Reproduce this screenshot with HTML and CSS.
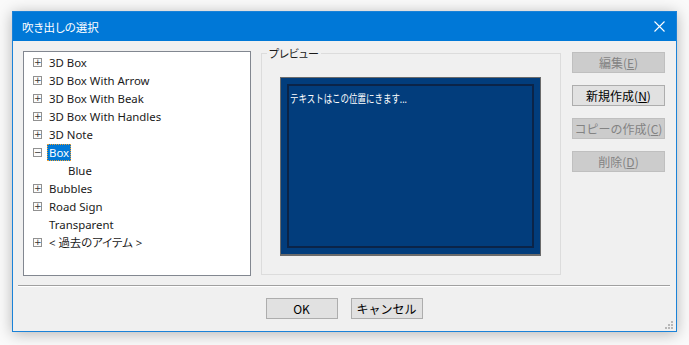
FILE: index.html
```html
<!DOCTYPE html>
<html lang="ja">
<head>
<meta charset="utf-8">
<link rel="stylesheet" href="styles.css">
</head>
<body>
<div class="window">
  <div class="titlebar">
    <span class="title">吹き出しの選択</span>
    <svg class="close" width="11" height="11" viewBox="0 0 11 11"><path d="M0.5 0.5 L10.5 10.5 M10.5 0.5 L0.5 10.5" stroke="#fff" stroke-width="1.1" fill="none"/></svg>
  </div>
  <div class="client">
    <div class="main">
      <div class="tree">
        <div class="row"><span class="exp">+</span><span class="label">3D Box</span></div>
        <div class="row"><span class="exp">+</span><span class="label">3D Box With Arrow</span></div>
        <div class="row"><span class="exp">+</span><span class="label">3D Box With Beak</span></div>
        <div class="row"><span class="exp">+</span><span class="label">3D Box With Handles</span></div>
        <div class="row"><span class="exp">+</span><span class="label">3D Note</span></div>
        <div class="row"><span class="exp">−</span><span class="label selected">Box</span></div>
        <div class="row child"><span class="label">Blue</span></div>
        <div class="row"><span class="exp">+</span><span class="label">Bubbles</span></div>
        <div class="row"><span class="exp">+</span><span class="label">Road Sign</span></div>
        <div class="row"><span class="noexp"></span><span class="label">Transparent</span></div>
        <div class="row"><span class="exp">+</span><span class="label">&lt; 過去のアイテム &gt;</span></div>
      </div>
      <fieldset class="group">
        <legend>プレビュー</legend>
        <div class="preview">
          <div class="preview-inner"><span class="ptext">テキストはこの位置にきます...</span></div>
        </div>
      </fieldset>
      <div class="side">
        <button class="btn disabled">編集(<u>E</u>)</button>
        <button class="btn">新規作成(<u>N</u>)</button>
        <button class="btn disabled">コピーの作成(<u>C</u>)</button>
        <button class="btn disabled">削除(<u>D</u>)</button>
      </div>
    </div>
    <div class="sep"></div>
    <div class="footer">
      <button class="btn dlg">OK</button>
      <button class="btn dlg">キャンセル</button>
    </div>
    <svg class="grip" width="9" height="9" viewBox="0 0 9 9">
      <g fill="#b8b8b8">
        <rect x="6" y="0" width="2" height="2"/>
        <rect x="3" y="3" width="2" height="2"/><rect x="6" y="3" width="2" height="2"/>
        <rect x="0" y="6" width="2" height="2"/><rect x="3" y="6" width="2" height="2"/><rect x="6" y="6" width="2" height="2"/>
      </g>
    </svg>
  </div>
</div>
</body>
</html>
```
FILE: styles.css
```css
* { box-sizing: border-box; }
html, body { margin: 0; padding: 0; }
body {
  width: 689px;
  height: 345px;
  background: #fafafa;
  font-family: "Noto Sans", "Noto Sans CJK JP", sans-serif;
  font-size: 12px;
  color: #000;
  overflow: hidden;
  padding: 11px 0 0 12px;
}
.window {
  width: 665px;
  height: 321px;
  border: 1px solid #1a82d8;
  background: #f0f0f0;
  box-shadow: 0 2px 14px rgba(0,0,0,0.28);
  display: flex;
  flex-direction: column;
}
.titlebar {
  height: 29px;
  background: #0078d7;
  display: flex;
  align-items: center;
  justify-content: space-between;
  padding: 0 11px 0 9px;
  flex: none;
}
.title {
  color: #fff;
  font-family: "Noto Sans CJK JP", sans-serif;
  font-size: 11.5px;
  font-feature-settings: "palt";
}
.client {
  flex: 1;
  position: relative;
  padding: 10px 0 0 0;
}
.main {
  display: flex;
  align-items: flex-start;
  padding-left: 10px;
}
.tree {
  width: 228px;
  height: 225px;
  background: #fff;
  border: 1px solid #828790;
  padding-top: 1px;
  font-size: 11.4px;
  font-feature-settings: "palt";
}
.row {
  height: 18px;
  display: flex;
  align-items: center;
  padding-left: 9px;
  white-space: nowrap;
}
.exp {
  width: 9px;
  height: 9px;
  border: 1px solid #919191;
  font-size: 9px;
  line-height: 7px;
  text-align: center;
  color: #333;
  font-family: "DejaVu Sans", sans-serif;
  margin-right: 5px;
  flex: none;
  background: #fbfbfb;
}
.noexp { width: 9px; margin-right: 5px; flex: none; }
.label {
  padding: 0 2px;
  height: 17px;
  line-height: 17px;
  color: #1a1a1a;
}
.label.selected {
  background: #0078d7;
  color: #fff;
  outline: 1px dotted #f0a030;
  outline-offset: -1px;
}
.row.child { padding-left: 42px; }
.group {
  margin: 2px 0 0 10px;
  width: 300px;
  height: 222px;
  border: 1px solid #dcdcdc;
  padding: 0;
  position: relative;
}
.group legend {
  position: absolute;
  top: -8px;
  left: 5px;
  padding: 0 2px;
  background: #f0f0f0;
  line-height: 14px;
  font-size: 11px;
  font-family: "Noto Sans CJK JP", sans-serif;
  font-feature-settings: "palt";
  color: #1a1a1a;
}
.preview {
  margin: 23px 0 0 18px;
  width: 261px;
  height: 179px;
  background: #023d7c;
  border: 1px solid #6b6b6b;
  border-bottom-width: 2px;
  padding: 6px;
}
.preview-inner {
  width: 100%;
  height: 100%;
  border: 2px solid #0b2448;
  color: #fff;
  padding: 5px 1px;
  line-height: 15px;
  white-space: nowrap;
}
.ptext {
  display: inline-block;
  font-family: "Noto Sans CJK JP", sans-serif;
  font-size: 11px;
  transform: scaleX(0.77);
  transform-origin: left center;
}
.side {
  margin: 1px 0 0 11px;
  width: 93px;
  display: flex;
  flex-direction: column;
  gap: 12px;
}
.btn {
  width: 93px;
  height: 21px;
  background: #e1e1e1;
  border: 1px solid #adadad;
  font-family: "Noto Sans CJK JP", sans-serif;
  font-size: 12px;
  color: #000;
  padding: 0;
  line-height: 19px;
  text-align: center;
}
.btn.disabled {
  background: #cccccc;
  border-color: #bfbfbf;
  color: #838383;
}
.sep {
  margin: 9px 6px 0 5px;
  height: 2px;
  border-top: 1px solid #a0a0a0;
  border-bottom: 1px solid #ffffff;
}
.footer {
  display: flex;
  justify-content: center;
  gap: 13px;
  margin-top: 11px;
  padding-right: 1px;
}
.btn.dlg { width: 72px; }
.grip {
  position: absolute;
  right: 2px;
  bottom: 1px;
}
```
